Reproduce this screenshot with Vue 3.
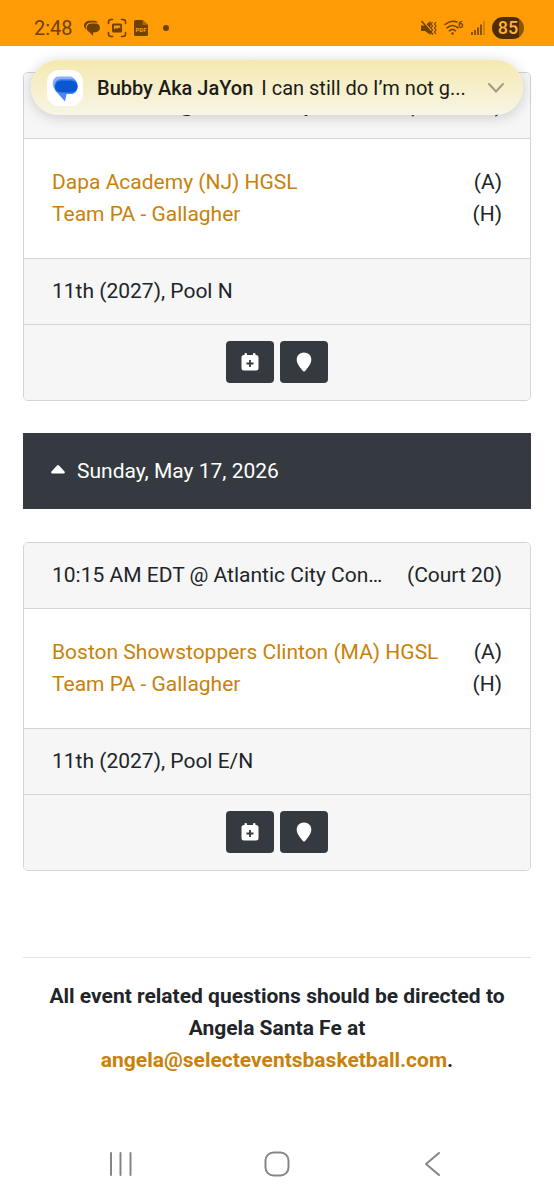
<script setup>
const saturdayGame = {
  time: '1:15 PM EDT @ Atlantic City Convention Center',
  court: '(Court 20)',
  away: 'Dapa Academy (NJ) HGSL',
  home: 'Team PA - Gallagher',
  division: '11th (2027), Pool N',
}
const sundayGame = {
  time: '10:15 AM EDT @ Atlantic City Convention Center',
  court: '(Court 20)',
  away: 'Boston Showstoppers Clinton (MA) HGSL',
  home: 'Team PA - Gallagher',
  division: '11th (2027), Pool E/N',
}
const schedule = [
  { game: saturdayGame },
  { day: 'Sunday, May 17, 2026', game: sundayGame },
]
</script>

<template>
  <div class="screen">
    <header class="status">
      <span class="clock">2:48</span>
      <svg class="ico" width="18" height="18" viewBox="0 0 18 18" aria-hidden="true">
        <path d="M3 10.500C-.5 8 .5 2.200 6 1.800h4.500c2 0 3.500.5 4.500 1.700H8C3.800 3.500 2 7 3 10.500z" fill="#6f4200" />
        <path d="M8.500 4.500h3.500c6.500 0 6.500 8 1 8.800l-3 .2.200 3.500-4.200-4.300c-4-1.500-3-8.200 2.500-8.200z" fill="#6f4200" />
      </svg>
      <svg class="ico" width="20" height="20" viewBox="0 0 20 20" fill="none" stroke="#6f4200" stroke-width="1.600" stroke-linecap="round" aria-hidden="true">
        <path d="M1.500 5.500V4q0-2.500 2.500-2.500h1.500M14.500 1.500H16q2.500 0 2.500 2.500v1.500M18.500 14.500V16q0 2.500-2.500 2.500h-1.500M5.500 18.500H4q-2.500 0-2.500-2.500v-1.500" />
        <path fill-rule="evenodd" d="M6.500 5.500h7q1.500 0 1.500 1.500v6q0 1.500-1.500 1.500h-7Q5 14.500 5 13V7q0-1.500 1.500-1.500zM7 7.500v4l2-1.500 1.500.8 1.500-1.600 1.200 1.300v-3z" fill="#6f4200" stroke="none" />
      </svg>
      <svg class="ico" width="16" height="18" viewBox="0 0 16 18" aria-hidden="true">
        <path d="M2.500 1h7L15 6v9.500q0 1.500-1.500 1.500h-11Q1 17 1 15.500v-13Q1 1 2.500 1z" fill="#6f4200" />
        <path d="M9.500 1v5H15z" fill="#a86400" />
        <text x="8" y="12.500" class="pdf">PDF</text>
      </svg>
      <span class="dot"></span>
      <span class="grow"></span>
      <svg class="ico" width="18" height="18" viewBox="0 0 18 18" aria-hidden="true">
        <path d="M1 6.500h4L10.500 2v14L5 12H1z" fill="#6f4200" />
        <path d="M2.500 1.500l10.500 12" stroke="#ff9b05" stroke-width="1.400" />
        <path d="M1.500 2l11.500 13.500" stroke="#6f4200" stroke-width="1.500" />
        <path d="M12.500 3l-1.500 2 1.500 2-1.500 2 1.500 2-1.500 2M16 3l-1.500 2L16 7l-1.500 2 1.500 2-1.500 2 1.500 2" fill="none" stroke="#6f4200" stroke-width="1.200" />
      </svg>
      <svg class="ico" width="20" height="18" viewBox="0 0 20 18" fill="none" stroke="#6f4200" stroke-width="1.500" stroke-linecap="round" aria-hidden="true">
        <path d="M1 5.500Q7 .5 13 3M3 8.800q5.500-4.600 11 0M5.500 11.800q3-2.500 6 0" />
        <circle cx="8.500" cy="14.500" r="1.200" fill="#6f4200" stroke="none" />
        <text x="16.500" y="8.500" class="six">6</text>
      </svg>
      <svg class="ico" width="16" height="18" viewBox="0 0 16 18" stroke="#6f4200" stroke-width="1.600" aria-hidden="true">
        <path d="M2 13v3M5 11v5M8 8.500V16M11 5.500V16" />
        <path d="M14 2v14" stroke="#c67908" />
      </svg>
      <span class="battery">85</span>
    </header>

    <aside class="toast">
      <span class="app-icon">
        <svg width="28" height="28" viewBox="0 0 28 28" aria-hidden="true">
          <path d="M8 2.500h10.500c3.500 0 6 2.500 6 6L6 17C-.5 13.500.5 2.500 8 2.500z" fill="#8fb0f8" />
          <path d="M10 5h11c7 0 8 13 .5 15H15.500L14 27.500 6 18.500C1 14.500 3 5 10 5z" fill="#4c86f7" />
          <rect x="4" y="6.500" width="22.500" height="12" rx="6" fill="#0b57d0" />
        </svg>
      </span>
      <strong class="sender">Bubby Aka JaYon</strong>
      <span class="message">I can still do I’m not g...</span>
      <button class="expand" type="button" aria-label="Expand notification">
        <svg width="18" height="12" viewBox="0 0 18 12" fill="none" stroke="#a09b86" stroke-width="2" stroke-linecap="round" aria-hidden="true">
          <path d="M2 2l7 7.500L16 2" />
        </svg>
      </button>
    </aside>

    <main class="page">
      <template v-for="(entry, i) in schedule" :key="i">
        <button v-if="entry.day" class="day" type="button">
          <svg width="14" height="13" viewBox="0 0 14 13" aria-hidden="true">
            <path d="M6 .5q1-.8 2 0l5.500 6q1 1.800-1 2h-11q-2-.2-1-2z" fill="#fff" />
          </svg>
          <span>{{ entry.day }}</span>
        </button>
        <article class="card">
          <div class="row shade">
            <span class="time">{{ entry.game.time }}</span>
            <span>{{ entry.game.court }}</span>
          </div>
          <div class="teams">
            <div class="team"><a href="#">{{ entry.game.away }}</a><span>(A)</span></div>
            <div class="team"><a href="#">{{ entry.game.home }}</a><span>(H)</span></div>
          </div>
          <div class="row shade">{{ entry.game.division }}</div>
          <div class="actions shade">
            <button type="button" class="btn" aria-label="Add to calendar">
              <svg width="18" height="20" viewBox="0 0 18 20" aria-hidden="true">
                <path d="M3.500 3V2q0-1 1.250-1T6 2v1h6V2q0-1 1.250-1T14.500 2v1h.5q2.500 0 2.500 2.500V16q0 2.500-2.500 2.500H3Q.5 18.500.5 16V5.500Q.5 3 3 3z" fill="#fff" />
                <path d="M9 8v7M5.500 11.500h7" stroke="#343a40" stroke-width="1.800" />
              </svg>
            </button>
            <button type="button" class="btn" aria-label="Show location">
              <svg width="16" height="20" viewBox="0 0 16 20" aria-hidden="true">
                <path d="M8 .5c4.200 0 7.300 3.100 7.300 7.200 0 3.600-3.800 8.400-6.300 11.300q-1 1-2 0C4.500 16.100.7 11.300.7 7.700.7 3.600 3.800.5 8 .5z" fill="#fff" />
              </svg>
            </button>
          </div>
        </article>
      </template>

      <footer class="contact">
        All event related questions should be directed to Angela Santa Fe at
        <a href="mailto:angela@selecteventsbasketball.com">angela@selecteventsbasketball.com</a>.
      </footer>
    </main>

    <nav class="nav">
      <button type="button" aria-label="Recent apps">
        <svg width="26" height="26" viewBox="0 0 26 26"><path d="M3 2v22M12.500 2v22M22.500 2v22" /></svg>
      </button>
      <button type="button" aria-label="Home">
        <svg width="26" height="26" viewBox="0 0 26 26"><rect x="1.500" y="1.500" width="23" height="23" rx="8" /></svg>
      </button>
      <button type="button" aria-label="Back">
        <svg width="26" height="26" viewBox="0 0 26 26"><path d="M19 2L6 13l13 11" /></svg>
      </button>
    </nav>
  </div>
</template>

<style>
body {
  margin: 0;
  background: #fff;
}
</style>

<style scoped>
.screen {
  position: relative;
  display: flex;
  flex-direction: column;
  min-height: 100vh;
  background: #fff;
  color: #212529;
  font-family: Roboto, "Liberation Sans", sans-serif;
  font-size: 21px;
  line-height: 32px;
}
button {
  font: inherit;
  border: 0;
  cursor: pointer;
}
a {
  color: #c8820a;
  text-decoration: none;
}
.status {
  display: flex;
  align-items: center;
  gap: 6px;
  box-sizing: border-box;
  height: 46px;
  padding: 10px 30px 0 34px;
  background: #ff9b05;
  color: #6f4200;
}
.clock {
  margin-right: 4px;
  font-size: 20px;
}
.ico {
  flex: none;
}
.pdf {
  font-size: 6px;
  font-weight: 700;
  fill: #ff9b05;
  text-anchor: middle;
}
.six {
  font-size: 9px;
  font-weight: 700;
  fill: #6f4200;
  stroke: none;
  text-anchor: middle;
}
.dot {
  width: 6px;
  height: 6px;
  margin-left: 8px;
  border-radius: 50%;
  background: #6f4200;
}
.grow {
  flex: 1;
}
.battery {
  width: 32px;
  height: 22px;
  border-radius: 11px;
  background: linear-gradient(90deg, #4d2e00 85%, #8a5400 85%);
  color: #ffb13b;
  font-size: 18px;
  font-weight: 500;
  line-height: 22px;
  text-align: center;
}
.toast {
  position: absolute;
  top: 60px;
  left: 31px;
  right: 31px;
  display: flex;
  align-items: center;
  box-sizing: border-box;
  height: 55px;
  padding: 0 16px;
  border-radius: 28px;
  background: linear-gradient(#f5e9b0, #f7f5e6);
  box-shadow: 0 2px 14px rgba(0, 0, 0, 0.18);
  color: #1d1c17;
  font-size: 20px;
  white-space: nowrap;
}
.app-icon {
  display: grid;
  place-items: center;
  width: 36px;
  height: 36px;
  margin-right: 14px;
  border-radius: 12px;
  background: #fff;
}
.sender {
  margin-right: 8px;
  font-weight: 500;
}
.message {
  flex: 1;
}
.expand {
  display: grid;
  padding: 2px;
  background: none;
}
.page {
  flex: 1;
  padding: 26px 23px 0;
}
.card {
  overflow: hidden;
  border: 1px solid #d4d4d4;
  border-radius: 5px;
}
.shade {
  background: #f6f6f6;
}
.row {
  display: flex;
  justify-content: space-between;
  gap: 16px;
  padding: 16px 28px 17px;
  border-bottom: 1px solid #d4d4d4;
}
.time {
  overflow: hidden;
  min-width: 0;
  text-overflow: ellipsis;
}
.row span {
  white-space: nowrap;
}
.teams {
  padding: 27px 28px 28px;
  border-bottom: 1px solid #d4d4d4;
}
.team {
  display: flex;
  justify-content: space-between;
}
.actions {
  display: flex;
  justify-content: center;
  gap: 6px;
  padding: 16px 0 17px;
}
.btn {
  display: grid;
  place-items: center;
  width: 48px;
  height: 42px;
  padding: 0;
  border-radius: 4px;
  background: #343a40;
}
.day {
  display: flex;
  align-items: center;
  gap: 12px;
  width: 100%;
  height: 76px;
  margin: 32px 0 33px;
  padding: 0 28px;
  background: #343a40;
  color: #fff;
}
.contact {
  margin-top: 86px;
  padding: 22px 16px 0;
  border-top: 1px solid #e2e2e2;
  font-weight: 700;
  text-align: center;
}
.nav {
  display: flex;
  justify-content: space-between;
  padding: 0 108px 23px;
}
.nav button {
  display: grid;
  padding: 0;
  background: none;
}
.nav svg {
  fill: none;
  stroke: #858585;
  stroke-width: 2;
  stroke-linecap: round;
  stroke-linejoin: round;
}
</style>
